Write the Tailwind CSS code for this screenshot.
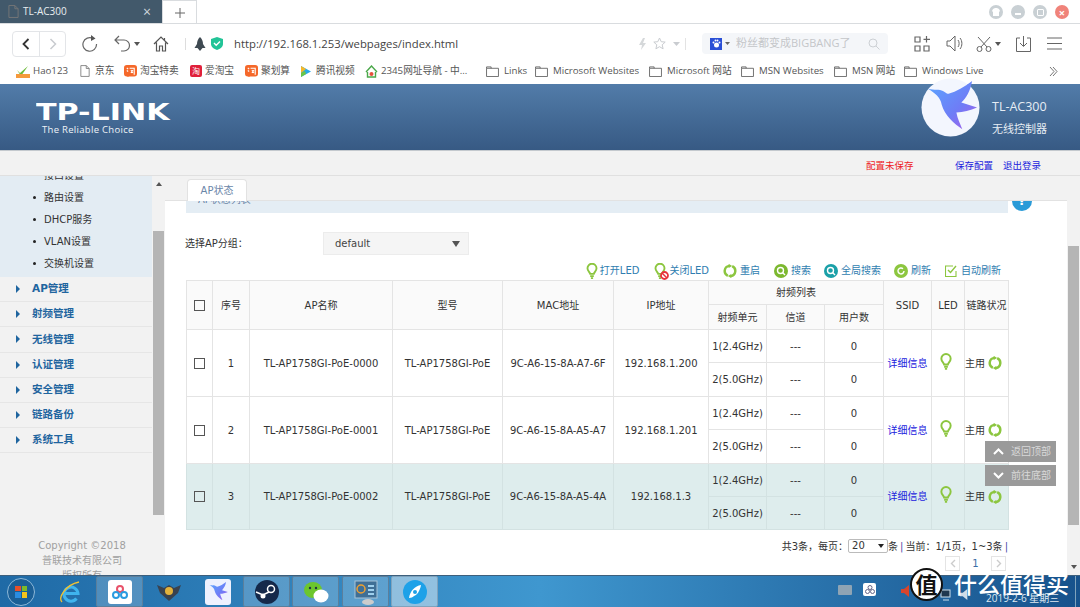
<!DOCTYPE html>
<html lang="zh-CN">
<head>
<meta charset="UTF-8">
<title>TL-AC300</title>
<script src="https://cdn.jsdelivr.net/npm/@tailwindcss/browser@4"></script>
</head>
<body class="bg-white">
<!-- shared icons -->
<svg class="absolute w-0 h-0">
  <defs>
    <linearGradient id="birdFill" x1="0" y1="0" x2="1" y2="1"><stop offset="0" stop-color="#5aa6ff"/><stop offset="0.6" stop-color="#6f7cf6"/><stop offset="1" stop-color="#b05ce8"/></linearGradient>
    <symbol id="bird" viewBox="0 0 60 60"><path fill="url(#birdFill)" d="M7 11C11 12 13 12 16 12C22 11 25 16 28 16C36 14 44 9 52 3C50 14 46 20 41 25L57 30C50 33 43 35 36 35C37 41 40 47 42 52C34 47 24 38 21 27C20 20 14 15 7 11Z"/></symbol>
    <symbol id="bulb" viewBox="0 0 16 22"><path fill="none" stroke="#8cc63f" stroke-width="2.600" d="M5.500 15C5 12.500 1.800 11 1.800 7.200a6.200 6.200 0 0 1 12.400 0c0 3.800-3.200 5.300-3.700 7.800Z"/><path stroke="#8cc63f" stroke-width="2.400" d="M5.500 18h5M6.500 20.800h3"/></symbol>
    <symbol id="cycle" viewBox="0 0 16 16"><path fill="none" stroke="#8cc63f" stroke-width="2.800" d="M5.500 13.500A6 6 0 0 1 7 2.100M10.500 2.500A6 6 0 0 1 9 13.900"/><path fill="#8cc63f" d="M6.500-.2L10.500 2.200 6.500 4.600ZM9.500 16.200L5.500 13.800 9.500 11.400Z"/></symbol>
    <symbol id="folder" viewBox="0 0 14 12"><path fill="none" stroke="#666" d="M.5 2.500h13v9H.5ZM.5 2.500V1h5v1.500"/></symbol>
    <symbol id="page" viewBox="0 0 12 14"><path fill="none" stroke="#777" d="M1 .5h6.500L11 4v9.500H1ZM7.500.5V4H11"/></symbol>
    <symbol id="taobao" viewBox="0 0 14 14"><rect width="14" height="12.500" rx="3" fill="#f5682a"/><path d="M4 13l3-2H3Z" fill="#f5682a"/><path stroke="#fff" stroke-width="1.200" fill="none" d="M3 3l1.500 1.500M3 6l1.500 1M6 3.500h5v7M7.500 5.500l2 3M9.500 5.500l-2 3"/></symbol>
  </defs>
</svg>

<div class="w-[1080px] h-[607px] overflow-hidden relative flex flex-col text-[#333] font-['Open_Sans','Noto_Sans_CJK_SC',sans-serif]">

  <!-- tab strip -->
  <div class="h-[24px] shrink-0 flex border-b border-[#d9dcdf]">
    <div class="w-[162px] h-[23px] bg-[#42596b] text-[#e8edf0] text-[10px] flex items-center pl-[8px] gap-[4px]">
      <svg class="w-[11px] h-[13px]"><use href="#page"/></svg>
      <span class="flex-1">TL-AC300</span>
      <span class="mr-[11px] text-[14px] leading-none text-[#cfd7dc]">×</span>
    </div>
    <div class="w-[35px] h-[24px] border-x border-t border-[#d9dcdf] flex items-center justify-center">
      <svg class="w-[12px] h-[12px]" viewBox="0 0 12 12"><path stroke="#666" d="M6 1v10M1 6h10"/></svg>
    </div>
    <div class="flex-1 flex justify-end items-center gap-[8px] pr-[11px] pt-[1px]">
      <div class="w-[14px] h-[14px] rounded-full bg-[#c9d0d4] flex items-center justify-center"><svg class="w-[8px] h-[8px]" viewBox="0 0 8 8"><path fill="#fff" d="M1 1l2-1h2l2 1 1 2-1 1v4H1V4L0 3Z"/></svg></div>
      <div class="w-[14px] h-[14px] rounded-full bg-[#c9d0d4] flex items-center justify-center"><div class="w-[6px] h-[2px] bg-white mt-[3px]"></div></div>
      <div class="w-[14px] h-[14px] rounded-full bg-[#c9d0d4] flex items-center justify-center"><div class="w-[7px] h-[7px] border border-white rounded-[1px]"></div></div>
      <div class="w-[14px] h-[14px] rounded-full bg-[#f0837a] flex items-center justify-center text-white text-[11px] leading-none font-bold">×</div>
    </div>
  </div>

  <!-- address toolbar -->
  <div class="h-[35px] shrink-0 flex items-center relative pl-[12px] pt-[2px]">
    <div class="w-[54px] h-[26px] flex border border-[#e3e5e8] rounded-[4px] mt-[2px]">
      <div class="w-[27px] flex items-center justify-center border-r border-[#e3e5e8]"><svg class="w-[8px] h-[12px]" viewBox="0 0 8 12"><path d="M6.500 1L1.500 6l5 5" fill="none" stroke="#333" stroke-width="1.800"/></svg></div>
      <div class="flex-1 flex items-center justify-center"><svg class="w-[8px] h-[12px]" viewBox="0 0 8 12"><path d="M1.500 1l5 5-5 5" fill="none" stroke="#c8cbcf" stroke-width="1.500"/></svg></div>
    </div>
    <svg class="w-[17px] h-[17px] ml-[15px] mt-[2px]" viewBox="0 0 17 17"><path d="M12 3.500A6.800 6.800 0 1 0 15.500 9" fill="none" stroke="#666" stroke-width="1.200"/><path d="M10 0l4.500 3.500L10 6Z" fill="#555"/></svg>
    <svg class="w-[17px] h-[17px] ml-[16px] mt-[2px]" viewBox="0 0 17 17"><path d="M5 1L1 5l4 4M1 5h9a5.500 5.500 0 0 1 0 11H7" fill="none" stroke="#666" stroke-width="1.200"/></svg>
    <svg class="w-[6px] h-[4px] ml-[3px] mt-[2px]" viewBox="0 0 6 4"><path d="M0 0h6L3 4Z" fill="#555"/></svg>
    <svg class="w-[16px] h-[16px] ml-[13px] mt-[2px]" viewBox="0 0 16 16"><path d="M1 8l7-7 7 7M3.500 6.500V15h3v-5h3v5h3V6.500M11.500 2v2.500" fill="none" stroke="#555" stroke-width="1.200"/></svg>
    <div class="w-px h-[12px] bg-[#ddd] ml-[16px] mt-[2px]"></div>
    <svg class="w-[12px] h-[14px] ml-[8px] mt-[2px]" viewBox="0 0 12 14"><path d="M6 0c2 2 3 4 3 7l2.500 4H8.500L6 14 3.500 11H.5L3 7c0-3 1-5 3-7Z" fill="#3f4a52"/></svg>
    <svg class="w-[12px] h-[13px] ml-[5px] mt-[2px]" viewBox="0 0 12 13"><path d="M6 0l6 2v5c0 3-3 5-6 6-3-1-6-3-6-6V2Z" fill="#22c497"/><path d="M3 6l2.200 2.200L9 4.500" fill="none" stroke="#fff" stroke-width="1.400"/></svg>
    <span class="ml-[11px] mt-[4px] text-[11.300px] text-[#444] w-[406px] whitespace-nowrap">http://192.168.1.253/webpages/index.html</span>
    <svg class="w-[9px] h-[12px] -ml-[2px] mt-[2px]" viewBox="0 0 9 12"><path d="M5 0L1 7h3L3 12l5-7H5l2-5Z" fill="#d5d8da"/></svg>
    <svg class="w-[13px] h-[13px] ml-[6px] mt-[2px]" viewBox="0 0 13 13"><path d="M6.500 1l1.700 3.700 4 .4-3 2.700.9 4-3.600-2.100-3.600 2.100.9-4-3-2.700 4-.4Z" fill="none" stroke="#c9ccd0"/></svg>
    <svg class="w-[7px] h-[4px] ml-[7px] mt-[2px]" viewBox="0 0 7 4"><path d="M0 0h7L3.500 4Z" fill="#c9ccd0"/></svg>
    <div class="w-px h-[12px] bg-[#e3e3e3] ml-[5px] mt-[2px]"></div>
    <div class="w-[186px] h-[21px] ml-[16px] mt-[2px] bg-[#f4f6f9] rounded-[4px] flex items-center pl-[8px] pr-[8px]">
      <div class="w-[12px] h-[12px] bg-[#2a4fd6] border border-[#2a4fd6] flex items-center justify-center"><svg class="w-[9px] h-[9px]" viewBox="0 0 9 9"><circle cx="4.500" cy="6" r="2.500" fill="#fff"/><circle cx="1.500" cy="3.500" r="1" fill="#fff"/><circle cx="3.500" cy="1.500" r="1" fill="#fff"/><circle cx="5.500" cy="1.500" r="1" fill="#fff"/><circle cx="7.500" cy="3.500" r="1" fill="#fff"/></svg></div>
      <svg class="w-[5px] h-[3px] ml-[3px]" viewBox="0 0 5 3"><path d="M0 0h5L2.500 3Z" fill="#666"/></svg>
      <span class="ml-[6px] flex-1 text-[11px] text-[#c4c6c9] whitespace-nowrap">粉丝都变成BIGBANG了</span>
      <svg class="w-[12px] h-[12px]" viewBox="0 0 12 12"><circle cx="5" cy="5" r="4" fill="none" stroke="#ccd0d4"/><path d="M8 8l3.500 3.500" stroke="#ccd0d4"/></svg>
    </div>
    <svg class="w-[16px] h-[16px] ml-[26px] mt-[2px]" viewBox="0 0 16 16"><path d="M1 1h5v5H1ZM1 10h5v5H1ZM10 10h5v5h-5ZM12.500 0v6.500M9.500 3.300h6.500" fill="none" stroke="#666" stroke-width="1.200"/></svg>
    <svg class="w-[17px] h-[17px] ml-[16px] mt-[2px]" viewBox="0 0 17 17"><path d="M1 6h3l5-5v15l-5-5H1ZM12 5c1.500 2 1.500 5 0 7M14 3c2.500 3 2.500 8 0 11" fill="none" stroke="#666"/></svg>
    <svg class="w-[16px] h-[16px] ml-[13px] mt-[2px]" viewBox="0 0 16 16"><path d="M2 1l9 10M14 1L5 11" stroke="#666" fill="none"/><circle cx="3.500" cy="13" r="2.500" fill="none" stroke="#666"/><circle cx="12.500" cy="13" r="2.500" fill="none" stroke="#666"/></svg>
    <svg class="w-[6px] h-[4px] ml-[3px] mt-[2px]" viewBox="0 0 6 4"><path d="M0 0h6L3 4Z" fill="#555"/></svg>
    <svg class="w-[15px] h-[16px] ml-[15px] mt-[2px]" viewBox="0 0 15 16"><path d="M4 2H.5v13.500h14V2H11M7.500 0v10M4 7l3.500 3.500L11 7" fill="none" stroke="#666"/></svg>
    <svg class="w-[15px] h-[13px] ml-[16px] mt-[2px]" viewBox="0 0 15 13"><path d="M0 1h15M0 6.500h15M0 12h15" stroke="#666"/></svg>
  </div>

  <!-- bookmarks -->
  <div class="h-[25px] shrink-0 flex items-center pl-[16px] text-[9.700px] text-[#555] whitespace-nowrap">
    <div class="w-[64px] flex items-center gap-[3px]"><svg class="w-[14px] h-[13px]" viewBox="0 0 14 13"><path d="M1 5l3 3 8-7-7 10Z" fill="#6dbb3a"/><rect y="9" width="14" height="4" fill="#f59a3c"/></svg>Hao123</div>
    <div class="w-[44px] flex items-center gap-[5px]"><svg class="w-[10px] h-[12px]"><use href="#page"/></svg>京东</div>
    <div class="w-[66px] flex items-center gap-[3px]"><svg class="w-[13px] h-[13px]"><use href="#taobao"/></svg>淘宝特卖</div>
    <div class="w-[55px] flex items-center gap-[3px]"><div class="w-[12px] h-[12px] bg-[#e0203a] rounded-[2px] text-white text-[8px] leading-[12px] text-center">淘</div>爱淘宝</div>
    <div class="w-[55px] flex items-center gap-[3px]"><svg class="w-[13px] h-[13px]"><use href="#taobao"/></svg>聚划算</div>
    <div class="w-[65px] flex items-center gap-[4px]"><svg class="w-[12px] h-[13px]" viewBox="0 0 12 13"><path d="M1 1l10 5.500L1 12Z" fill="#27a9e8"/><path d="M1 1l5 3-5 4Z" fill="#f5b92a"/><path d="M1 12l5-3-1-3-4 2Z" fill="#6cc644"/></svg>腾讯视频</div>
    <div class="w-[121px] flex items-center gap-[3px]"><svg class="w-[13px] h-[13px]" viewBox="0 0 13 13"><path d="M1 7l5.500-6L12 7M2.500 7v5h8V7" fill="none" stroke="#4ba84a" stroke-width="1.400"/><circle cx="6.500" cy="9" r="2" fill="#e6503c"/></svg>2345网址导航 - 中...</div>
    <div class="w-[49px] flex items-center gap-[5px]"><svg class="w-[13px] h-[11px]"><use href="#folder"/></svg>Links</div>
    <div class="w-[114px] flex items-center gap-[5px]"><svg class="w-[13px] h-[11px]"><use href="#folder"/></svg>Microsoft Websites</div>
    <div class="w-[92px] flex items-center gap-[5px]"><svg class="w-[13px] h-[11px]"><use href="#folder"/></svg>Microsoft 网站</div>
    <div class="w-[93px] flex items-center gap-[5px]"><svg class="w-[13px] h-[11px]"><use href="#folder"/></svg>MSN Websites</div>
    <div class="w-[70px] flex items-center gap-[5px]"><svg class="w-[13px] h-[11px]"><use href="#folder"/></svg>MSN 网站</div>
    <div class="w-[145px] flex items-center gap-[5px]"><svg class="w-[13px] h-[11px]"><use href="#folder"/></svg>Windows Live</div>
    <svg class="w-[9px] h-[9px]" viewBox="0 0 9 9"><path d="M1 0l4 4.500L1 9M4 0l4 4.500L4 9" fill="none" stroke="#777"/></svg>
  </div>

  <!-- router header -->
  <div class="h-[67px] shrink-0 bg-linear-to-b from-[#527ca9] to-[#375a84] border-b border-[#c4c9ce] flex items-start pl-[36px] pr-[30px] relative">
    <div class="text-white leading-none pt-[17px]">
      <div class="text-[23px] font-bold origin-left scale-x-[1.31] font-['DejaVu_Sans',sans-serif] leading-[22px]">TP-LINK</div>
      <div class="text-[9.500px] text-[#eef3f8] pl-[6px] pt-[2px] tracking-[0.3px]">The Reliable Choice</div>
    </div>
    <div class="ml-auto pt-[14px] text-[#e6edf4] w-[58px]">
      <div class="text-[12.500px] leading-[18px] whitespace-nowrap">TL-AC300</div>
      <div class="text-[11px] leading-[18px] mt-[4px] whitespace-nowrap">无线控制器</div>
    </div>
    <svg class="absolute left-[921px] -top-[6px] w-[59px] h-[59px]" viewBox="0 0 60 60"><circle cx="30" cy="30" r="29.500" fill="#f3f6fe"/><use href="#bird" width="60" height="60"/></svg>
  </div>

  <!-- save bar -->
  <div class="h-[25px] shrink-0 bg-[#f2f2f2] border-b border-[#e0e0e0] flex items-center text-[9.500px] pl-[866px] pt-[6px]">
    <span class="text-[#ee1c25] w-[89px]">配置未保存</span>
    <span class="text-[#2222dd] w-[48px]">保存配置</span>
    <span class="text-[#2222dd]">退出登录</span>
  </div>

  <!-- main -->
  <div class="flex-1 flex min-h-0 font-['DejaVu_Sans','Noto_Sans_CJK_SC',sans-serif]">
    <!-- sidebar -->
    <aside class="w-[152px] shrink-0 bg-[#f2f2f2] overflow-hidden flex flex-col text-[10px]">
      <ul class="bg-[#e3ecf3] -mt-[12px] text-[#333]">
        <li class="h-[22px] flex items-center pl-[44px]">接口设置</li>
        <li class="h-[22px] flex items-center pl-[33px] gap-[8px]"><i class="w-[3px] h-[3px] rounded-full bg-[#222]"></i>路由设置</li>
        <li class="h-[22px] flex items-center pl-[33px] gap-[8px]"><i class="w-[3px] h-[3px] rounded-full bg-[#222]"></i>DHCP服务</li>
        <li class="h-[22px] flex items-center pl-[33px] gap-[8px]"><i class="w-[3px] h-[3px] rounded-full bg-[#222]"></i>VLAN设置</li>
        <li class="h-[22px] flex items-center pl-[33px] gap-[8px]"><i class="w-[3px] h-[3px] rounded-full bg-[#222]"></i>交换机设置</li>
        <li class="h-[3px]"></li>
      </ul>
      <ul class="text-[#1f659f] font-bold text-[10.500px]">
        <li class="h-[25.200px] flex items-center pl-[16px] gap-[12px] border-b border-[#e6e6e6]"><i class="border-l-[4px] border-l-[#1f659f] border-y-[4px] border-y-transparent"></i>AP管理</li>
        <li class="h-[25.200px] flex items-center pl-[16px] gap-[12px] border-b border-[#e6e6e6]"><i class="border-l-[4px] border-l-[#1f659f] border-y-[4px] border-y-transparent"></i>射频管理</li>
        <li class="h-[25.200px] flex items-center pl-[16px] gap-[12px] border-b border-[#e6e6e6]"><i class="border-l-[4px] border-l-[#1f659f] border-y-[4px] border-y-transparent"></i>无线管理</li>
        <li class="h-[25.200px] flex items-center pl-[16px] gap-[12px] border-b border-[#e6e6e6]"><i class="border-l-[4px] border-l-[#1f659f] border-y-[4px] border-y-transparent"></i>认证管理</li>
        <li class="h-[25.200px] flex items-center pl-[16px] gap-[12px] border-b border-[#e6e6e6]"><i class="border-l-[4px] border-l-[#1f659f] border-y-[4px] border-y-transparent"></i>安全管理</li>
        <li class="h-[25.200px] flex items-center pl-[16px] gap-[12px] border-b border-[#e6e6e6]"><i class="border-l-[4px] border-l-[#1f659f] border-y-[4px] border-y-transparent"></i>链路备份</li>
        <li class="h-[25.200px] flex items-center pl-[16px] gap-[12px] border-b border-[#e6e6e6]"><i class="border-l-[4px] border-l-[#1f659f] border-y-[4px] border-y-transparent"></i>系统工具</li>
      </ul>
      <div class="mt-auto text-[#a0a0a0] text-[10px] leading-[15px] text-center -mb-[8px] pl-[12px]">
        <div class="whitespace-nowrap">Copyright ©2018</div>
        <div>普联技术有限公司</div>
        <div>版权所有</div>
      </div>
    </aside>

    <!-- left scrollbar -->
    <div class="w-[13px] shrink-0 bg-[#f2f2f2] flex flex-col items-center">
      <i class="mt-[6px] border-b-[4px] border-b-[#555] border-x-[3px] border-x-transparent"></i>
      <div class="w-[11px] h-[284px] bg-[#b5b5b5] mt-[45px]"></div>
    </div>

    <!-- content -->
    <div class="flex-1 min-w-0 flex flex-col relative overflow-hidden text-[10px]">
      <div class="h-[25px] shrink-0 bg-[#f2f2f2] border-b border-[#e2e2e2] pl-[22px] pt-[3px]">
        <div class="w-[60px] h-[22px] bg-white border border-b-0 border-[#e2e2e2] rounded-t-[4px] text-[#6a86a8] flex items-center justify-center">AP状态</div>
      </div>
      <div class="ml-[21px] mr-[59px] h-[12px] bg-[#e4edf4] shrink-0 overflow-hidden text-[#6a86a8] pl-[12px]"><div class="-mt-[9px]">AP状态列表</div></div>
      <!-- help badge, cut by the tab strip -->
      <div class="absolute left-[847px] top-[25px] w-[20px] h-[10px] overflow-hidden">
        <div class="w-[20px] h-[20px] -mt-[10px] rounded-full bg-[#2a9bd8] text-white text-[13px] leading-[20px] text-center font-bold">?</div>
      </div>

      <div class="ml-[20px] mt-[19px] h-[23px] shrink-0 flex items-center">
        <span class="w-[138px]">选择AP分组：</span>
        <div class="w-[146px] h-[23px] bg-[#f5f5f5] border border-[#ececec] flex items-center justify-between pl-[11px] pr-[8px] text-[#444]">default<i class="border-t-[6px] border-t-[#555] border-x-[4px] border-x-transparent"></i></div>
      </div>

      <!-- actions -->
      <div class="w-[836px] mt-[5px] h-[20px] pt-[1px] shrink-0 flex items-center justify-end text-[#2f7db0]">
        <svg class="w-[12px] h-[16px]"><use href="#bulb"/></svg><span class="ml-[2px] mr-[15px]">打开LED</span>
        <div class="relative w-[15px] h-[16px]"><svg class="w-[12px] h-[16px]"><use href="#bulb"/></svg><svg class="absolute left-[6px] top-[8px] w-[9px] h-[9px]" viewBox="0 0 9 9"><circle cx="4.500" cy="4.500" r="3.500" fill="#fff" stroke="#e8343c" stroke-width="1.800"/><path d="M2 2l5 5" stroke="#e8343c" stroke-width="1.500"/></svg></div><span class="mr-[14px]">关闭LED</span>
        <svg class="w-[14px] h-[14px]"><use href="#cycle"/></svg><span class="ml-[3px] mr-[14px]">重启</span>
        <svg class="w-[14px] h-[14px]" viewBox="0 0 14 14"><circle cx="7" cy="7" r="7" fill="#7cb82f"/><circle cx="6.500" cy="6.500" r="3" fill="none" stroke="#fff" stroke-width="1.400"/><path d="M8.500 8.500l2.500 2.500" stroke="#fff" stroke-width="1.400"/></svg><span class="ml-[3px] mr-[13px]">搜索</span>
        <svg class="w-[14px] h-[14px]" viewBox="0 0 14 14"><circle cx="7" cy="7" r="7" fill="#1aa0a8"/><circle cx="6.500" cy="6.500" r="3" fill="none" stroke="#fff" stroke-width="1.400"/><path d="M8.500 8.500l2.500 2.500" stroke="#fff" stroke-width="1.400"/></svg><span class="ml-[3px] mr-[13px]">全局搜索</span>
        <svg class="w-[14px] h-[14px]" viewBox="0 0 14 14"><circle cx="7" cy="7" r="7" fill="#8cc63f"/><path d="M10 7a3 3 0 1 1-1-2.300" fill="none" stroke="#fff" stroke-width="1.400"/></svg><span class="ml-[3px] mr-[14px]">刷新</span>
        <svg class="w-[12px] h-[12px]" viewBox="0 0 12 12"><path d="M11 6v5.500H.5V1H8" fill="none" stroke="#8cc63f" stroke-width="1.100"/><path d="M3 5l2.500 2.500L11 1" fill="none" stroke="#8cc63f" stroke-width="1.400"/></svg><span class="ml-[4px]">自动刷新</span>
      </div>

      <!-- AP table -->
      <table class="ml-[21px] w-[822px] shrink-0 table-fixed border-collapse text-center text-[#333]">
        <colgroup>
          <col class="w-[26px]"><col class="w-[37px]"><col class="w-[143px]"><col class="w-[110px]"><col class="w-[111px]"><col class="w-[95px]"><col class="w-[58px]"><col class="w-[58px]"><col class="w-[59px]"><col class="w-[48px]"><col class="w-[33px]"><col class="w-[44px]">
        </colgroup>
        <thead class="bg-[#fafafa]">
          <tr class="h-[24px]">
            <th rowspan="2" class="font-normal border border-[#e4e4e4]"><div class="w-[11px] h-[11px] border border-[#555] mx-auto"></div></th>
            <th rowspan="2" class="font-normal border border-[#e4e4e4]">序号</th>
            <th rowspan="2" class="font-normal border border-[#e4e4e4]">AP名称</th>
            <th rowspan="2" class="font-normal border border-[#e4e4e4]">型号</th>
            <th rowspan="2" class="font-normal border border-[#e4e4e4]">MAC地址</th>
            <th rowspan="2" class="font-normal border border-[#e4e4e4]">IP地址</th>
            <th colspan="3" class="font-normal border border-[#e4e4e4]">射频列表</th>
            <th rowspan="2" class="font-normal border border-[#e4e4e4]">SSID</th>
            <th rowspan="2" class="font-normal border border-[#e4e4e4]">LED</th>
            <th rowspan="2" class="font-normal border border-[#e4e4e4] whitespace-nowrap">链路状况</th>
          </tr>
          <tr class="h-[25px]">
            <th class="font-normal border border-[#e4e4e4]">射频单元</th>
            <th class="font-normal border border-[#e4e4e4]">信道</th>
            <th class="font-normal border border-[#e4e4e4]">用户数</th>
          </tr>
        </thead>
        <tbody>
          <tr class="h-[33px]">
            <td rowspan="2" class="border border-[#e4e4e4]"><div class="w-[11px] h-[11px] border border-[#555] mx-auto"></div></td>
            <td rowspan="2" class="border border-[#e4e4e4]">1</td>
            <td rowspan="2" class="border border-[#e4e4e4] whitespace-nowrap">TL-AP1758GI-PoE-0000</td>
            <td rowspan="2" class="border border-[#e4e4e4] whitespace-nowrap">TL-AP1758GI-PoE</td>
            <td rowspan="2" class="border border-[#e4e4e4] whitespace-nowrap">9C-A6-15-8A-A7-6F</td>
            <td rowspan="2" class="border border-[#e4e4e4]">192.168.1.200</td>
            <td class="border border-[#e4e4e4]">1(2.4GHz)</td>
            <td class="border border-[#e4e4e4]">---</td>
            <td class="border border-[#e4e4e4]">0</td>
            <td rowspan="2" class="border border-[#e4e4e4] text-[#2222dd]">详细信息</td>
            <td rowspan="2" class="border border-[#e4e4e4]"><svg class="w-[12px] h-[17px] ml-[8px] -mt-[4px]"><use href="#bulb"/></svg></td>
            <td rowspan="2" class="border border-[#e4e4e4] whitespace-nowrap"><div class="flex items-center gap-[3px]">主用<svg class="w-[14px] h-[14px]"><use href="#cycle"/></svg></div></td>
          </tr>
          <tr class="h-[34px]">
            <td class="border border-[#e4e4e4]">2(5.0GHz)</td>
            <td class="border border-[#e4e4e4]">---</td>
            <td class="border border-[#e4e4e4]">0</td>
          </tr>
          <tr class="h-[33px]">
            <td rowspan="2" class="border border-[#e4e4e4]"><div class="w-[11px] h-[11px] border border-[#555] mx-auto"></div></td>
            <td rowspan="2" class="border border-[#e4e4e4]">2</td>
            <td rowspan="2" class="border border-[#e4e4e4] whitespace-nowrap">TL-AP1758GI-PoE-0001</td>
            <td rowspan="2" class="border border-[#e4e4e4] whitespace-nowrap">TL-AP1758GI-PoE</td>
            <td rowspan="2" class="border border-[#e4e4e4] whitespace-nowrap">9C-A6-15-8A-A5-A7</td>
            <td rowspan="2" class="border border-[#e4e4e4]">192.168.1.201</td>
            <td class="border border-[#e4e4e4]">1(2.4GHz)</td>
            <td class="border border-[#e4e4e4]">---</td>
            <td class="border border-[#e4e4e4]">0</td>
            <td rowspan="2" class="border border-[#e4e4e4] text-[#2222dd]">详细信息</td>
            <td rowspan="2" class="border border-[#e4e4e4]"><svg class="w-[12px] h-[17px] ml-[8px] -mt-[4px]"><use href="#bulb"/></svg></td>
            <td rowspan="2" class="border border-[#e4e4e4] whitespace-nowrap"><div class="flex items-center gap-[3px]">主用<svg class="w-[14px] h-[14px]"><use href="#cycle"/></svg></div></td>
          </tr>
          <tr class="h-[34px]">
            <td class="border border-[#e4e4e4]">2(5.0GHz)</td>
            <td class="border border-[#e4e4e4]">---</td>
            <td class="border border-[#e4e4e4]">0</td>
          </tr>
          <tr class="h-[33px] bg-[#deeded]">
            <td rowspan="2" class="border border-[#d3e2e2]"><div class="w-[11px] h-[11px] border border-[#555] mx-auto"></div></td>
            <td rowspan="2" class="border border-[#d3e2e2]">3</td>
            <td rowspan="2" class="border border-[#d3e2e2] whitespace-nowrap">TL-AP1758GI-PoE-0002</td>
            <td rowspan="2" class="border border-[#d3e2e2] whitespace-nowrap">TL-AP1758GI-PoE</td>
            <td rowspan="2" class="border border-[#d3e2e2] whitespace-nowrap">9C-A6-15-8A-A5-4A</td>
            <td rowspan="2" class="border border-[#d3e2e2]">192.168.1.3</td>
            <td class="border border-[#d3e2e2]">1(2.4GHz)</td>
            <td class="border border-[#d3e2e2]">---</td>
            <td class="border border-[#d3e2e2]">0</td>
            <td rowspan="2" class="border border-[#d3e2e2] text-[#2222dd]">详细信息</td>
            <td rowspan="2" class="border border-[#d3e2e2]"><svg class="w-[12px] h-[17px] ml-[8px] -mt-[4px]"><use href="#bulb"/></svg></td>
            <td rowspan="2" class="border border-[#d3e2e2] whitespace-nowrap"><div class="flex items-center gap-[3px]">主用<svg class="w-[14px] h-[14px]"><use href="#cycle"/></svg></div></td>
          </tr>
          <tr class="h-[33px] bg-[#deeded]">
            <td class="border border-[#d3e2e2]">2(5.0GHz)</td>
            <td class="border border-[#d3e2e2]">---</td>
            <td class="border border-[#d3e2e2]">0</td>
          </tr>
        </tbody>
      </table>

      <!-- pagination -->
      <div class="w-[843px] mt-[9px] h-[14px] shrink-0 flex items-center justify-end whitespace-nowrap">
        共3条，每页：
        <div class="w-[40px] h-[14px] border border-[#bbb] rounded-[2px] flex items-center justify-between px-[3px] leading-none">20<i class="border-t-[4px] border-t-[#222] border-x-[3px] border-x-transparent"></i></div>
        条<span class="text-[#4a4aa8] mx-[2px]">|</span>当前：1/1页，1~3条<span class="text-[#4a4aa8] ml-[2px]">|</span>
      </div>
      <div class="w-[842px] mt-[3px] h-[15px] shrink-0 flex items-center justify-end text-[#3a6ea5]">
        <div class="w-[15px] h-[15px] border border-[#e4e4e4] flex items-center justify-center"><svg class="w-[6px] h-[9px]" viewBox="0 0 6 9"><path d="M5 1L1.500 4.500 5 8" fill="none" stroke="#ccc" stroke-width="1.400"/></svg></div>
        <span class="w-[31px] text-center">1</span>
        <div class="w-[15px] h-[15px] border border-[#e4e4e4] flex items-center justify-center mr-[1px]"><svg class="w-[6px] h-[9px]" viewBox="0 0 6 9"><path d="M1 1l3.500 3.500L1 8" fill="none" stroke="#ccc" stroke-width="1.400"/></svg></div>
      </div>

      <!-- floating jump buttons -->
      <div class="absolute left-[820px] top-[265px] w-[71px] flex flex-col gap-[3px] text-[#d8d8d8]">
        <div class="h-[21px] bg-[#9a9a9a] flex items-center pl-[8px] gap-[7px]"><svg class="w-[11px] h-[7px]" viewBox="0 0 11 7"><path d="M1 6l4.500-4.500L10 6" fill="none" stroke="#fff" stroke-width="2"/></svg>返回顶部</div>
        <div class="h-[21px] bg-[#9a9a9a] flex items-center pl-[8px] gap-[7px]"><svg class="w-[11px] h-[7px]" viewBox="0 0 11 7"><path d="M1 1l4.500 4.500L10 1" fill="none" stroke="#fff" stroke-width="2"/></svg>前往底部</div>
      </div>
    </div>

    <!-- right scrollbar -->
    <div class="w-[13px] shrink-0 bg-[#f2f2f2] flex flex-col items-center">
      <div class="w-[11px] h-[279px] bg-[#b5b5b5] mt-[70px]"></div>
      <i class="mt-[40px] border-t-[4px] border-t-[#555] border-x-[3px] border-x-transparent"></i>
    </div>
  </div>

  <!-- windows taskbar -->
  <div class="h-[32px] shrink-0 bg-linear-to-r from-[#1f6aa6] via-[#3f97cf] to-[#17528c] border-t border-[#3d5f7c] flex items-center relative">
    <div class="w-[28px] h-[28px] rounded-full ml-[7px] bg-[#1b5f96] border border-[#8db8d8] grid grid-cols-2 gap-px p-[7px]">
      <i class="bg-[#e8502a]"></i><i class="bg-[#7cbb2a]"></i><i class="bg-[#2a8ce0]"></i><i class="bg-[#f5c31c]"></i>
    </div>
    <svg class="w-[24px] h-[24px] ml-[24px]" viewBox="0 0 24 24"><path d="M5 13.500h14a7 7 0 1 0-1.500 5" fill="none" stroke="#3fb4ee" stroke-width="3"/><path d="M3 22C-1 18 6 5 20 2" fill="none" stroke="#f2c231" stroke-width="1.300"/></svg>
    <div class="w-[47px] h-[31px] ml-[13px] border border-[#5b7f9c] rounded-[2px] bg-white/20 flex items-center justify-center">
      <div class="w-[24px] h-[24px] rounded-[3px] bg-white flex items-center justify-center"><svg class="w-[18px] h-[16px]" viewBox="0 0 18 16"><circle cx="9" cy="5" r="3" fill="none" stroke="#e8526a" stroke-width="2"/><circle cx="5" cy="11" r="3" fill="none" stroke="#2a9be0" stroke-width="2"/><circle cx="13" cy="11" r="3" fill="none" stroke="#2a9be0" stroke-width="2"/></svg></div>
    </div>
    <svg class="w-[26px] h-[18px] ml-[13px]" viewBox="0 0 26 18"><path d="M1 2l7 3 5-3 5 3 7-3-3 8-9 8-9-8Z" fill="#39424f"/><circle cx="13" cy="8" r="4" fill="#e3b23c"/></svg>
    <div class="w-[26px] h-[26px] ml-[23px] rounded-[3px] bg-[#eef1fe] flex items-center justify-center"><svg class="w-[22px] h-[22px]"><use href="#bird"/></svg></div>
    <div class="w-[47px] h-[31px] ml-[12px] border border-[#5b7f9c] rounded-[2px] bg-white/20 flex items-center justify-center">
      <svg class="w-[24px] h-[24px]" viewBox="0 0 24 24"><circle cx="12" cy="12" r="12" fill="#15294a"/><circle cx="16" cy="9" r="3.500" fill="none" stroke="#fff" stroke-width="1.500"/><circle cx="8" cy="16" r="2.500" fill="#fff"/><path d="M1 12l7 3 6-3" stroke="#fff" fill="none" stroke-width="1.500"/></svg>
    </div>
    <div class="w-[47px] h-[31px] ml-[2px] border border-[#5b7f9c] rounded-[2px] bg-white/20 flex items-center justify-center">
      <svg class="w-[26px] h-[22px]" viewBox="0 0 26 22"><ellipse cx="10" cy="9" rx="9" ry="8" fill="#6cc62d"/><ellipse cx="18" cy="15" rx="7.500" ry="6.500" fill="#fff"/><circle cx="7" cy="7" r="1.200" fill="#234"/><circle cx="13" cy="7" r="1.200" fill="#234"/></svg>
    </div>
    <div class="w-[47px] h-[31px] ml-[3px] border border-[#5b7f9c] rounded-[2px] bg-white/20 flex items-center justify-center">
      <svg class="w-[26px] h-[26px]" viewBox="0 0 26 26"><rect x="2" y="2" width="22" height="17" fill="#3f6f96" stroke="#a8c4d8"/><circle cx="8" cy="10" r="4" fill="none" stroke="#f0a030" stroke-width="1.500"/><path d="M15 6h6v2h-6ZM15 10h6v2h-6ZM15 14h6v2h-6Z" fill="#9fd0ee"/><ellipse cx="15" cy="23" rx="6" ry="3" fill="#ccc"/></svg>
    </div>
    <div class="w-[47px] h-[31px] ml-[2px] border border-[#7fa3bd] rounded-[2px] bg-white/45 flex items-center justify-center">
      <svg class="w-[24px] h-[24px]" viewBox="0 0 24 24"><circle cx="12" cy="12" r="12" fill="#1da1e8"/><path d="M18 5c-6 1-11 6-12 13 2 0 4-1 5-2 3-1 6-5 7-11Z" fill="#fff"/><circle cx="12" cy="12" r="2" fill="#1da1e8"/></svg>
    </div>

    <!-- tray -->
    <div class="absolute left-[838px] top-[9px] w-[14px] h-[10px] bg-[#8fa4b4] rounded-[1px]"></div>
    <div class="absolute left-[863px] top-[7px] w-[13px] h-[13px] bg-white rounded-[2px] flex items-center justify-center"><svg class="w-[10px] h-[9px]" viewBox="0 0 10 9"><circle cx="5" cy="2.500" r="2" fill="none" stroke="#668"/><circle cx="2.500" cy="6.500" r="2" fill="none" stroke="#668"/><circle cx="7.500" cy="6.500" r="2" fill="none" stroke="#668"/></svg></div>
    <svg class="absolute left-[901px] top-[9px] w-[12px] h-[12px]" viewBox="0 0 12 12"><path d="M0 4h3l5-4v12L3 8H0Z" fill="#d8452c"/></svg>
    <svg class="absolute left-[940px] top-[13px] w-[12px] h-[12px]" viewBox="0 0 12 12"><rect x="1" y="1" width="9" height="7" fill="#20384f" stroke="#cfe0ec"/><path d="M3 11h6" stroke="#cfe0ec"/></svg>
    <svg class="absolute left-[960px] top-[13px] w-[11px] h-[11px]" viewBox="0 0 12 12"><path d="M0 4h3l5-4v12L3 8H0Z" fill="#cfdde8"/></svg>
    <div class="absolute right-[4px] top-0 bottom-0 w-px bg-[#7fa3bd]"></div>

    <!-- watermark -->
    <div class="absolute left-[910px] -top-[8px] w-[33px] h-[33px] rounded-full bg-white border-[2px] border-[#111] text-[#111] text-[22px] leading-[28px] text-center font-bold">值</div>
    <div class="absolute left-[954px] -top-[8px] text-white text-[23px] leading-[32px] font-medium whitespace-nowrap">什么值得买</div>
    <div class="absolute left-[986px] top-[15px] text-[10px] text-[#dfe9f1] whitespace-nowrap leading-[14px]">2019-2-6 星期三</div>
  </div>
</div>
</body>
</html>
